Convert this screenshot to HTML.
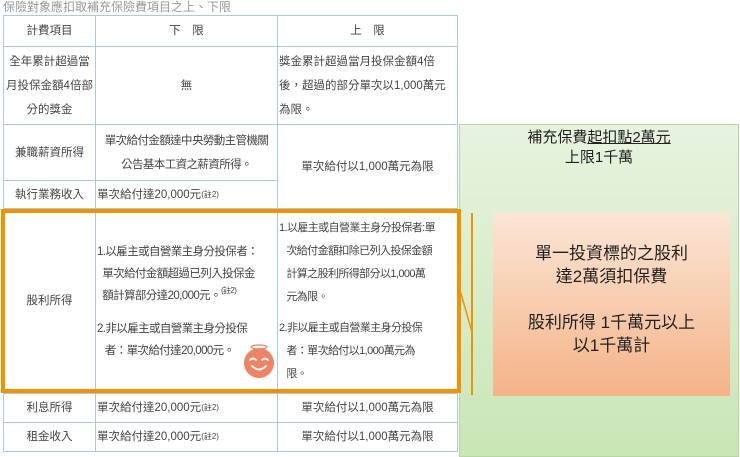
<!DOCTYPE html>
<html><head><meta charset="utf-8"><style>
*{margin:0;padding:0;box-sizing:border-box}
body{width:740px;height:457px;background:#fff;position:relative;overflow:hidden;font-family:"Liberation Sans","Noto Sans CJK TC",sans-serif;color:#444;font-size:11.5px}
.t{position:absolute;left:3px;top:0;font-size:12px;color:#999;line-height:14px}
.c{position:absolute;border:1px solid #a9cdd8;display:flex;align-items:center;justify-content:center;text-align:center;line-height:22px;padding:0 1px;white-space:nowrap}
.l{justify-content:flex-start;text-align:left}
sup{font-size:8px;vertical-align:6px;line-height:0}
.green{position:absolute;left:459px;top:124px;width:280px;height:333px;background:linear-gradient(#e7f3df,#c9e6b6);border:1px solid #b6d7a2}
.og{position:absolute;left:493px;top:212px;width:237px;height:184px;background:linear-gradient(#fbe6d6,#f4b387);color:#222;font-size:17px;text-align:center;line-height:23px;padding-top:30px}
.box{position:absolute;left:1px;top:209px;width:460px;height:184px;border:4px solid #f39200}
.n{letter-spacing:-0.6px}
</style></head><body>
<div class="t">保險對象應扣取補充保險費項目之上、下限</div>
<div class="green"></div>
<div style="position:absolute;left:459px;top:128px;width:280px;text-align:center;font-size:15px;line-height:20px;color:#222">補充保費<span style="text-decoration:underline">起扣點2萬元</span><br>上限1千萬</div>
<div class="og">單一投資標的之股利<br>達2萬須扣保費<br><br>股利所得 1千萬元以上<br>以1千萬計</div>
<div style="position:absolute;left:471px;top:213px;width:2px;height:182px;background:#f39200"></div>
<svg style="position:absolute;left:460px;top:290px" width="20" height="50"><line x1="0" y1="0" x2="12" y2="42" stroke="#f39200" stroke-width="1.5"/></svg>

<div class="c" style="left:3px;top:15px;width:93px;height:32px">計費項目</div>
<div class="c" style="left:95px;top:15px;width:183px;height:32px">下　限</div>
<div class="c" style="left:277px;top:15px;width:181px;height:32px">上　限</div>

<div class="c" style="left:3px;top:46px;width:93px;height:79px;line-height:24px">全年累計超過當<br>月投保金額4倍部<br>分的獎金</div>
<div class="c" style="left:95px;top:46px;width:183px;height:79px">無</div>
<div class="c l" style="left:277px;top:46px;width:181px;height:79px;line-height:24px">獎金累計超過當月投保金額4倍<br>後，超過的部分單次以1,000萬元<br>為限。</div>

<div class="c" style="left:3px;top:124px;width:93px;height:57px">兼職薪資所得</div>
<div class="c n" style="left:95px;top:124px;width:183px;height:57px;line-height:24px">單次給付金額達中央勞動主管機關<br>公告基本工資之薪資所得。</div>
<div class="c" style="left:277px;top:124px;width:181px;height:85px">單次給付以1,000萬元為限</div>

<div class="c" style="left:3px;top:180px;width:93px;height:29px">執行業務收入</div>
<div class="c l" style="left:95px;top:180px;width:183px;height:29px">單次給付達20,000元<sup>(註2)</sup></div>

<div class="c" style="left:3px;top:208px;width:93px;height:186px">股利所得</div>
<div class="c l n" style="left:95px;top:208px;width:183px;height:186px;line-height:22px"><div>1.以雇主或自營業主身分投保者：<br>&nbsp;&nbsp;單次給付金額超過已列入投保金<br>&nbsp;&nbsp;額計算部分達20,000元。<sup>(註2)</sup><div style="height:11px"></div>2.非以雇主或自營業主身分投保<br>&nbsp;&nbsp;&nbsp;者：單次給付達20,000元。</div></div>
<div class="c l n" style="left:277px;top:208px;width:181px;height:186px;line-height:23px;font-size:11px"><div>1.以雇主或自營業主身分投保者:單<br>&nbsp;&nbsp;&nbsp;次給付金額扣除已列入投保金額<br>&nbsp;&nbsp;&nbsp;計算之股利所得部分以1,000萬<br>&nbsp;&nbsp;&nbsp;元為限。<div style="height:8px"></div>2.非以雇主或自營業主身分投保<br>&nbsp;&nbsp;&nbsp;者：單次給付以1,000萬元為<br>&nbsp;&nbsp;&nbsp;限。</div></div>

<div class="c" style="left:3px;top:393px;width:93px;height:30px">利息所得</div>
<div class="c l" style="left:95px;top:393px;width:183px;height:30px">單次給付達20,000元<sup>(註2)</sup></div>
<div class="c" style="left:277px;top:393px;width:181px;height:30px">單次給付以1,000萬元為限</div>
<div class="c" style="left:3px;top:422px;width:93px;height:30px">租金收入</div>
<div class="c l" style="left:95px;top:422px;width:183px;height:30px">單次給付達20,000元<sup>(註2)</sup></div>
<div class="c" style="left:277px;top:422px;width:181px;height:30px">單次給付以1,000萬元為限</div>

<div class="box"></div>
<svg style="position:absolute;left:241px;top:343px" width="36" height="36"><circle cx="18" cy="20" r="15" fill="#ee8466"/><ellipse cx="18" cy="4" rx="8" ry="2" fill="none" stroke="#ee8466" stroke-width="1.2"/><path d="M9 17q3-3 6 0M21 17q3-3 6 0M11 23q7 7 14 0" fill="none" stroke="#fff" stroke-width="1.8" stroke-linecap="round"/></svg>
</body></html>
